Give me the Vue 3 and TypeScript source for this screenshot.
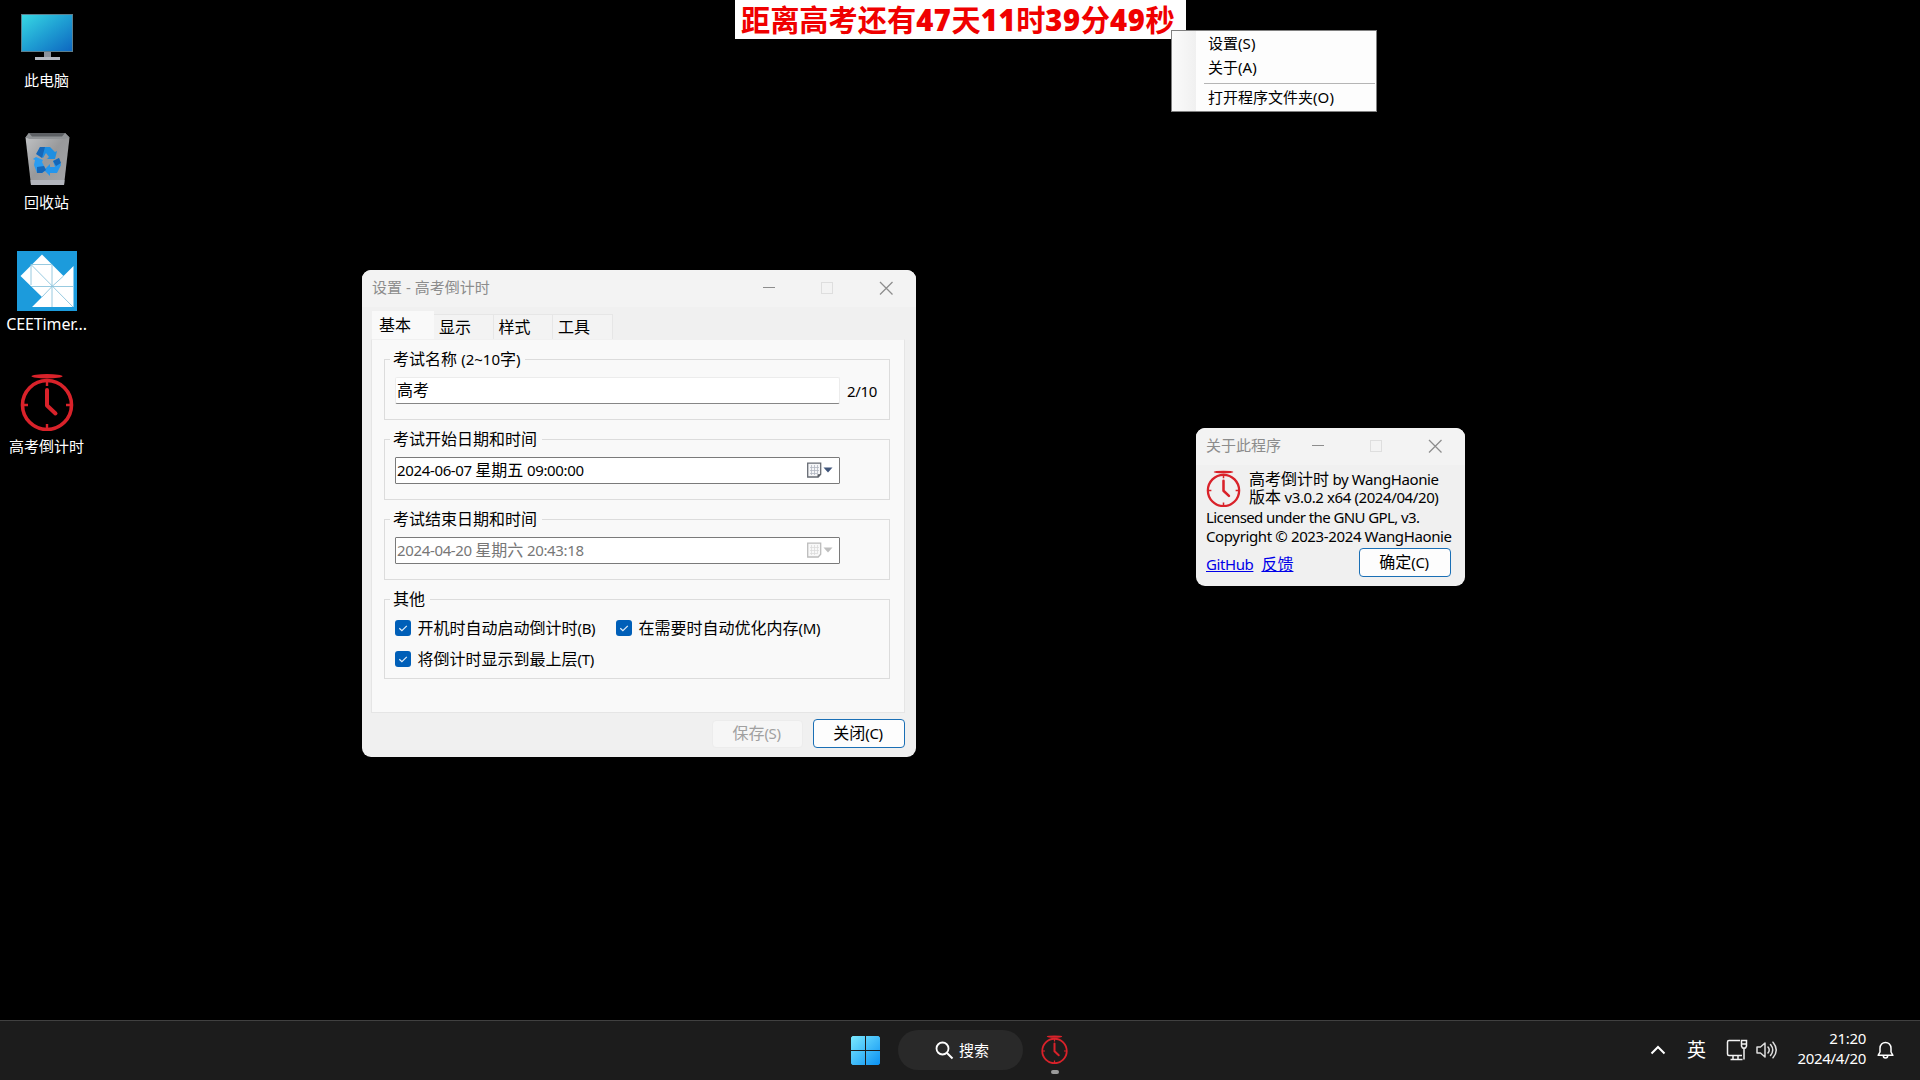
<script setup lang="ts">
interface Tab {
  label: string
  active?: boolean
}

const tabs: Tab[] = [
  { label: '基本', active: true },
  { label: '显示' },
  { label: '样式' },
  { label: '工具' },
]
</script>

<template>
  <svg class="defs" width="0" height="0">
    <defs>
      <linearGradient id="screen" x1="0" y1="0" x2="1" y2="1">
        <stop offset="0" stop-color="#38d9e4" />
        <stop offset="0.5" stop-color="#1f9fd3" />
        <stop offset="1" stop-color="#0d66c0" />
      </linearGradient>
      <linearGradient id="bin" x1="0" y1="0" x2="1" y2="1">
        <stop offset="0" stop-color="#c3c5c7" />
        <stop offset="0.5" stop-color="#98999b" />
        <stop offset="1" stop-color="#a5a7aa" />
      </linearGradient>
      <linearGradient id="win" x1="0" y1="0" x2="1" y2="1">
        <stop offset="0" stop-color="#7be9fe" />
        <stop offset="1" stop-color="#0a91f3" />
      </linearGradient>
    </defs>
    <symbol id="clock" viewBox="0 0 54 58">
      <ellipse cx="27" cy="3.2" rx="15.5" ry="2.2" />
      <circle cx="27" cy="32" r="24.5" fill="none" stroke="currentColor" stroke-width="3.6" />
      <path d="M27 17v15.500l8.500 8" fill="none" stroke="currentColor" stroke-width="4" stroke-linecap="round" stroke-linejoin="round" />
      <path d="M27 8v5M27 51v5M3 32h5M46 32h5" stroke="currentColor" stroke-width="2.4" />
    </symbol>
  </svg>

  <main class="desktop">
    <section class="shortcuts">
      <div class="shortcut">
        <div class="pic">
          <svg width="60" height="60" viewBox="0 0 60 60">
            <rect x="4.500" y="7.500" width="51" height="37" fill="url(#screen)" stroke="#5d7f8d" />
            <path d="M27 45h7v6h-7z" fill="#8b929c" />
            <path d="M18 50h25v3H18z" fill="#b4b9c2" />
          </svg>
        </div>
        <span class="name">此电脑</span>
      </div>
      <div class="shortcut">
        <div class="pic">
          <svg width="60" height="60" viewBox="0 0 60 60">
            <path d="M12 4h36l4.500 4.500L47 56H14L8.500 8.500z" fill="url(#bin)" />
            <path d="M12 4h36l4.500 4.500H8.500z" fill="#5d6064" />
            <path d="M12 4l-3.500 4.500 4 1.500h35l5-1.500L48 4l-3 3.500H15z" fill="#909396" />
            <path d="M13.500 51h34L47 56H14z" fill="#b2b5bc" />
            <path d="M23 18h10l5 5 2-1-2 8h-8l2-2-3-4-3 5-6-4z" fill="#1e8fe2" />
            <path d="M19 28l7 3-1 2 4 8-4 3h-5l-3-8 1-5-2-1z" fill="#2b9cf0" />
            <path d="M36 32l6-3 2 7-4 8h-7v3l-6-6 6-6v3h5z" fill="#2596ec" />
            <path d="M23 18h5l-3 11-6-4zM36 32l6-3 2 5-5 3zM20 38l7-1 2 4-4 3h-5z" fill="#1667b8" />
          </svg>
        </div>
        <span class="name">回收站</span>
      </div>
      <div class="shortcut">
        <div class="pic">
          <svg width="60" height="60" viewBox="0 0 60 60">
            <rect width="60" height="60" fill="#1c9bdc" />
            <path d="M25 3.500L46.500 25 56.500 15v41H15l10-10L3.500 25z" fill="#fff" />
            <path d="M14 13.500h20.500M14 13.500V34M14 13.500L56 56M35 13.500V56M14 35.500h42M35 35.500L46.500 25M35 35.500L25 46" fill="none" stroke="#8cc4dd" stroke-width="0.9" />
          </svg>
        </div>
        <span class="name latin">CEETimer...</span>
      </div>
      <div class="shortcut">
        <div class="pic"><svg class="clock big"><use href="#clock" /></svg></div>
        <span class="name">高考倒计时</span>
      </div>
    </section>

    <div class="banner">距离高考还有<b>47</b>天<b>11</b>时<b>39</b>分<b>49</b>秒</div>

    <nav class="menu">
      <div class="item">设置<i>(S)</i></div>
      <div class="item">关于<i>(A)</i></div>
      <hr />
      <div class="item">打开程序文件夹<i>(O)</i></div>
    </nav>

    <section class="window settings">
      <header class="titlebar">
        <span class="title">设置 - 高考倒计时</span>
        <svg class="controls" width="132" height="16" viewBox="0 0 132 16">
          <path d="M1 7.500h12" stroke="#8d8d8d" />
          <rect x="59.500" y="2.500" width="11" height="11" fill="none" stroke="#dedede" />
          <path d="M118 2l12.500 12.500M130.500 2L118 14.500" stroke="#8d8d8d" stroke-width="1.300" />
        </svg>
      </header>

      <div class="tabs">
        <div v-for="tab in tabs" :key="tab.label" class="tab" :class="{ active: tab.active }">{{ tab.label }}</div>
      </div>

      <div class="panel">
        <div class="group">
          <span class="legend">考试名称 <i class="lim">(2~10</i>字<i>)</i></span>
          <div class="row">
            <div class="field text">高考</div>
            <span class="count">2/10</span>
          </div>
        </div>
        <div class="group">
          <span class="legend">考试开始日期和时间</span>
          <div class="row">
            <div class="field date">
              <span><i>2024-06-07 </i>星期五<i> 09:00:00</i></span>
              <svg width="26" height="17" viewBox="0 0 26 17">
                <path d="M.7 1.200h13v11l-2.500 2.800H.7z" fill="#f4f5f7" stroke="#666b73" stroke-width="1.300" />
                <path d="M3 5.500h9M3 8.500h9M3 11.500h7M4.500 3v10M7.500 3v10M10.500 3v9" stroke="#b2b7c2" stroke-width=".8" />
                <path d="M10.500 15.300v-3h3.400z" fill="#555a62" />
                <path d="M16.500 5.500h9L21 10.500z" fill="#40557a" />
              </svg>
            </div>
          </div>
        </div>
        <div class="group">
          <span class="legend">考试结束日期和时间</span>
          <div class="row">
            <div class="field date off">
              <span><i>2024-04-20 </i>星期六<i> 20:43:18</i></span>
              <svg width="26" height="17" viewBox="0 0 26 17">
                <path d="M.7 1.200h13v11l-2.500 2.800H.7z" fill="#f8f8f8" stroke="#bcbcbc" stroke-width="1.300" />
                <path d="M3 5.500h9M3 8.500h9M3 11.500h7M4.500 3v10M7.500 3v10M10.500 3v9" stroke="#dcdcdc" stroke-width=".8" />
                <path d="M16.500 5.500h9L21 10.500z" fill="#bfbfbf" />
              </svg>
            </div>
          </div>
        </div>
        <div class="group other">
          <span class="legend">其他</span>
          <div class="checks">
            <div class="check first">
              <svg width="16" height="16" viewBox="0 0 16 16"><rect width="16" height="16" rx="3" fill="#005fb8" /><path d="M4.300 8.200l2.600 2.500 4.900-4.900" fill="none" stroke="#e2eef9" stroke-width="1.200" /></svg>
              <span>开机时自动启动倒计时<i>(B)</i></span>
            </div>
            <div class="check">
              <svg width="16" height="16" viewBox="0 0 16 16"><rect width="16" height="16" rx="3" fill="#005fb8" /><path d="M4.300 8.200l2.600 2.500 4.900-4.900" fill="none" stroke="#e2eef9" stroke-width="1.200" /></svg>
              <span>在需要时自动优化内存<i>(M)</i></span>
            </div>
            <div class="check">
              <svg width="16" height="16" viewBox="0 0 16 16"><rect width="16" height="16" rx="3" fill="#005fb8" /><path d="M4.300 8.200l2.600 2.500 4.900-4.900" fill="none" stroke="#e2eef9" stroke-width="1.200" /></svg>
              <span>将倒计时显示到最上层<i>(T)</i></span>
            </div>
          </div>
        </div>
      </div>

      <footer class="actions">
        <div class="button disabled">保存<i>(S)</i></div>
        <div class="button">关闭<i>(C)</i></div>
      </footer>
    </section>

    <section class="window about">
      <header class="titlebar">
        <span class="title">关于此程序</span>
        <svg class="controls" width="132" height="16" viewBox="0 0 132 16">
          <path d="M1 7.500h12" stroke="#8d8d8d" />
          <rect x="59.500" y="2.500" width="11" height="11" fill="none" stroke="#dedede" />
          <path d="M118 2l12.500 12.500M130.500 2L118 14.500" stroke="#8d8d8d" stroke-width="1.300" />
        </svg>
      </header>
      <div class="info">
        <div class="product">
          <svg class="clock mid"><use href="#clock" /></svg>
          <div class="lines">
            <div>高考倒计时<i class="by"> by WangHaonie</i></div>
            <div>版本<i class="by"> v3.0.2 x64 (2024/04/20)</i></div>
          </div>
        </div>
        <div class="line lic">Licensed under the GNU GPL, v3.</div>
        <div class="line copy">Copyright © 2023-2024 WangHaonie</div>
        <div class="bottom">
          <a class="gh">GitHub</a>
          <a>反馈</a>
          <div class="button">确定<i>(C)</i></div>
        </div>
      </div>
    </section>

    <footer class="taskbar">
      <div class="center">
        <svg width="29" height="29" viewBox="0 0 29 29">
          <path d="M1.500 0H14v14H0V1.500zM15 0h12.500L29 1.500V14H15zM0 15h14v14H1.500L0 27.500zM15 15h14v12.500L27.500 29H15z" fill="url(#win)" />
        </svg>
        <div class="search">
          <svg width="19" height="19" viewBox="0 0 19 19"><circle cx="7.500" cy="7.500" r="6" fill="none" stroke="#fff" stroke-width="1.800" /><path d="M12 12l5.500 5.500" stroke="#fff" stroke-width="2" /></svg>
          <span>搜索</span>
        </div>
        <div class="running">
          <svg class="clock small"><use href="#clock" /></svg>
          <span class="dot"></span>
        </div>
      </div>
      <div class="tray">
        <svg class="chev" width="16" height="10" viewBox="0 0 16 10"><path d="M1.500 8.500L8 2l6.500 6.500" fill="none" stroke="#fff" stroke-width="2" /></svg>
        <span class="ime">英</span>
        <svg class="net" width="22" height="22" viewBox="0 0 22 22">
          <path d="M14 1.500H3Q1.500 1.500 1.500 3v12Q1.500 16.500 3 16.500h13M7 16.500v4M12 16.500v4M4.500 20.500H16.500M18 9v11.500" fill="none" stroke="#f2f2f2" stroke-width="1.500" />
          <path d="M15.500 1.500h5v5.500l-1 2h-3l-1-2zM15.500 5h5" fill="none" stroke="#f2f2f2" stroke-width="1.500" />
        </svg>
        <svg class="vol" width="22" height="18" viewBox="0 0 22 18">
          <path d="M1 6v6h3.500L9 16V2L4.500 6z" fill="none" stroke="#ddd" stroke-width="1.500" stroke-linejoin="round" />
          <path d="M12 6q2.500 3 0 6M14.500 3.500q4.500 5.500 0 11M17 1.200q6.500 7.800 0 15.600" fill="none" stroke="#ddd" stroke-width="1.500" stroke-linecap="round" />
        </svg>
        <div class="datetime"><span class="time">21:20</span><span class="day">2024/4/20</span></div>
        <svg class="bell" width="17" height="20" viewBox="0 0 17 20">
          <path d="M3 8.200a5.500 5.800 0 0 1 11 0V12l1.900 3.300H1.100L3 12zM6.300 15.800a2.200 2.200 0 0 0 4.400 0" fill="none" stroke="#fff" stroke-width="1.500" stroke-linejoin="round" />
        </svg>
      </div>
    </footer>
  </main>
</template>

<style>
html,
body {
  margin: 0;
  background: #000;
  overflow: hidden;
}
</style>

<style scoped>
.defs {
  position: absolute;
}
.desktop {
  position: relative;
  width: 1920px;
  height: 1080px;
  background: #000;
  font-family: "Noto Sans", "Noto Sans CJK SC", sans-serif;
  font-size: 16px;
  line-height: 20px;
  color: #000;
  white-space: pre;
  overflow: hidden;
}
i {
  font-style: normal;
  font-size: 15px;
  letter-spacing: -0.35px;
}
svg {
  display: block;
  flex: none;
}
.clock {
  color: #d9222a;
  fill: currentColor;
}
.big {
  width: 54px;
  height: 58px;
}
.mid {
  width: 35px;
  height: 37px;
}
.small {
  width: 27px;
  height: 29px;
}
.shortcuts {
  width: 93px;
  padding-top: 7px;
}
.shortcut {
  height: 122px;
  display: flex;
  flex-direction: column;
  align-items: center;
}
.pic {
  width: 60px;
  height: 60px;
  display: flex;
  justify-content: center;
}
.name {
  margin-top: 3px;
  color: #fff;
  font-size: 15px;
}
.name.latin {
  font-size: 16px;
  letter-spacing: -0.1px;
}
.banner {
  position: absolute;
  left: 735px;
  top: 0;
  width: 451px;
  height: 39px;
  padding-left: 6px;
  box-sizing: border-box;
  background: #fff;
  color: #f00000;
  font-size: 29.200px;
  font-weight: 700;
  line-height: 41px;
}
.banner b {
  letter-spacing: 0.6px;
}
.menu {
  position: absolute;
  left: 1171px;
  top: 30px;
  width: 206px;
  height: 82px;
  box-sizing: border-box;
  padding: 0 1px 0 0;
  border: 1px solid #808080;
  background: linear-gradient(90deg, #fbfbfb 0, #f0f0f0 24px, #fdfdfd 24px);
  font-size: 15px;
}
.menu .item {
  height: 24px;
  line-height: 24px;
  padding-left: 36px;
}
.menu i {
  letter-spacing: 0.1px;
}
.menu hr {
  margin: 4px 0 1px 32px;
  border: 0;
  height: 1px;
  background: #b5b5b5;
}
.window {
  position: absolute;
  box-sizing: border-box;
  border-radius: 9px;
  background: #f0f0f0;
  overflow: hidden;
}
.settings {
  left: 362px;
  top: 270px;
  width: 554px;
  height: 487px;
}
.about {
  left: 1196px;
  top: 428px;
  width: 269px;
  height: 158px;
}
.titlebar {
  display: flex;
  justify-content: space-between;
  align-items: center;
  height: 37px;
  padding: 0 22px 2px 10px;
  box-sizing: border-box;
  background: #f3f3f3;
  color: #8c8c8c;
  font-size: 15px;
}
.title {
  line-height: 18px;
  padding-bottom: 1px;
}
.tabs {
  display: flex;
  align-items: flex-end;
  height: 32px;
  padding-left: 10px;
}
.tab {
  width: 59.500px;
  height: 25px;
  line-height: 25px;
  padding-left: 5px;
  box-sizing: border-box;
  border: 1px solid #e6e6e6;
  border-left: 0;
  border-bottom: 0;
  background: #f3f3f3;
}
.tab.active {
  width: 62px;
  height: 28px;
  line-height: 28px;
  padding-left: 7px;
  border: 0;
  background: #f9f9f9;
}
.panel {
  margin-left: 9px;
  width: 534px;
  height: 374px;
  padding: 19px 0 0 12px;
  box-sizing: border-box;
  border: 1px solid #e5e5e5;
  border-top-color: #f0f0f0;
  background: #f9f9f9;
}
.group {
  width: 506px;
  height: 61px;
  margin-bottom: 19px;
  box-sizing: border-box;
  border: 1px solid #dcdcdc;
  padding-left: 5px;
}
.group.other {
  height: 80px;
}
.legend {
  display: block;
  width: max-content;
  margin-top: -11px;
  padding: 0 5px 0 3px;
  background: #f9f9f9;
}
.lim {
  letter-spacing: 0;
}
.row {
  display: flex;
  align-items: center;
  padding: 8px 0 0 5px;
}
.field {
  width: 445px;
  height: 27px;
  box-sizing: border-box;
  background: #fff;
  line-height: 25px;
}
.text {
  border: 1px solid #ececec;
  border-bottom-color: #868686;
  border-radius: 2px;
  padding-left: 1px;
}
.count {
  margin-left: 7px;
  font-size: 15px;
  letter-spacing: -0.3px;
}
.date {
  display: flex;
  justify-content: space-between;
  align-items: center;
  border: 1px solid #7a7a7a;
  border-radius: 1px;
  padding: 0 6px 0 1px;
}
.off {
  color: #777;
}
.checks {
  display: flex;
  flex-wrap: wrap;
  padding: 9px 0 0 5px;
}
.check {
  display: flex;
  align-items: center;
  gap: 6.500px;
  height: 20px;
  margin-bottom: 11px;
}
.first {
  width: 221px;
}
.actions {
  display: flex;
  justify-content: flex-end;
  align-items: center;
  gap: 10px;
  padding: 6px 11px 0 0;
}
.button {
  width: 92px;
  height: 29px;
  box-sizing: border-box;
  padding-right: 2px;
  border: 1px solid #1a6fb5;
  border-radius: 4px;
  background: #fdfdfd;
  line-height: 27px;
  text-align: center;
}
.button.disabled {
  width: 91px;
  height: 28px;
  line-height: 25px;
  border-color: #ececec;
  background: #f6f6f6;
  color: #a0a0a0;
}
.info {
  padding: 5px 14px 0 10px;
}
.product {
  display: flex;
  gap: 8px;
  height: 37px;
}
.lines div {
  height: 18px;
  line-height: 19px;
}
.line {
  height: 19px;
  font-size: 15px;
}
.by {
  letter-spacing: -0.4px;
}
.lic {
  letter-spacing: -0.6px;
}
.copy {
  letter-spacing: -0.37px;
}
.bottom {
  display: flex;
  align-items: center;
  gap: 8px;
  height: 35px;
}
.bottom .button {
  margin-left: auto;
}
.bottom a {
  padding-top: 3px;
  color: #0000e8;
  text-decoration: underline;
}
.gh {
  font-size: 15px;
  letter-spacing: -0.4px;
}
.taskbar {
  position: absolute;
  left: 0;
  right: 0;
  bottom: 0;
  height: 60px;
  box-sizing: border-box;
  padding-bottom: 1px;
  border-top: 1px solid #404040;
  background: #1c1c1c;
  color: #fff;
  display: flex;
  font-size: 15px;
}
.center {
  display: flex;
  align-items: center;
  padding-left: 851px;
}
.search {
  width: 125px;
  height: 40px;
  margin: 0 18px 0 18px;
  box-sizing: border-box;
  padding-left: 37px;
  border-radius: 20px;
  background: #292929;
  display: flex;
  align-items: center;
  gap: 5px;
}
.search span {
  padding-bottom: 1px;
}
.running {
  display: flex;
  flex-direction: column;
  align-items: center;
  gap: 6px;
  padding-top: 9px;
}
.dot {
  width: 8px;
  height: 4px;
  border-radius: 2px;
  background: #9a9a9a;
}
.tray {
  margin-left: auto;
  display: flex;
  align-items: center;
  padding-right: 26px;
}
.ime {
  margin: 0 20px 0 21px;
  font-size: 19px;
}
.vol {
  margin: 0 20px 0 8px;
}
.datetime {
  width: 68px;
  margin-right: 11px;
  padding-bottom: 4px;
  display: flex;
  flex-direction: column;
  align-items: flex-end;
  letter-spacing: -0.3px;
}
</style>
